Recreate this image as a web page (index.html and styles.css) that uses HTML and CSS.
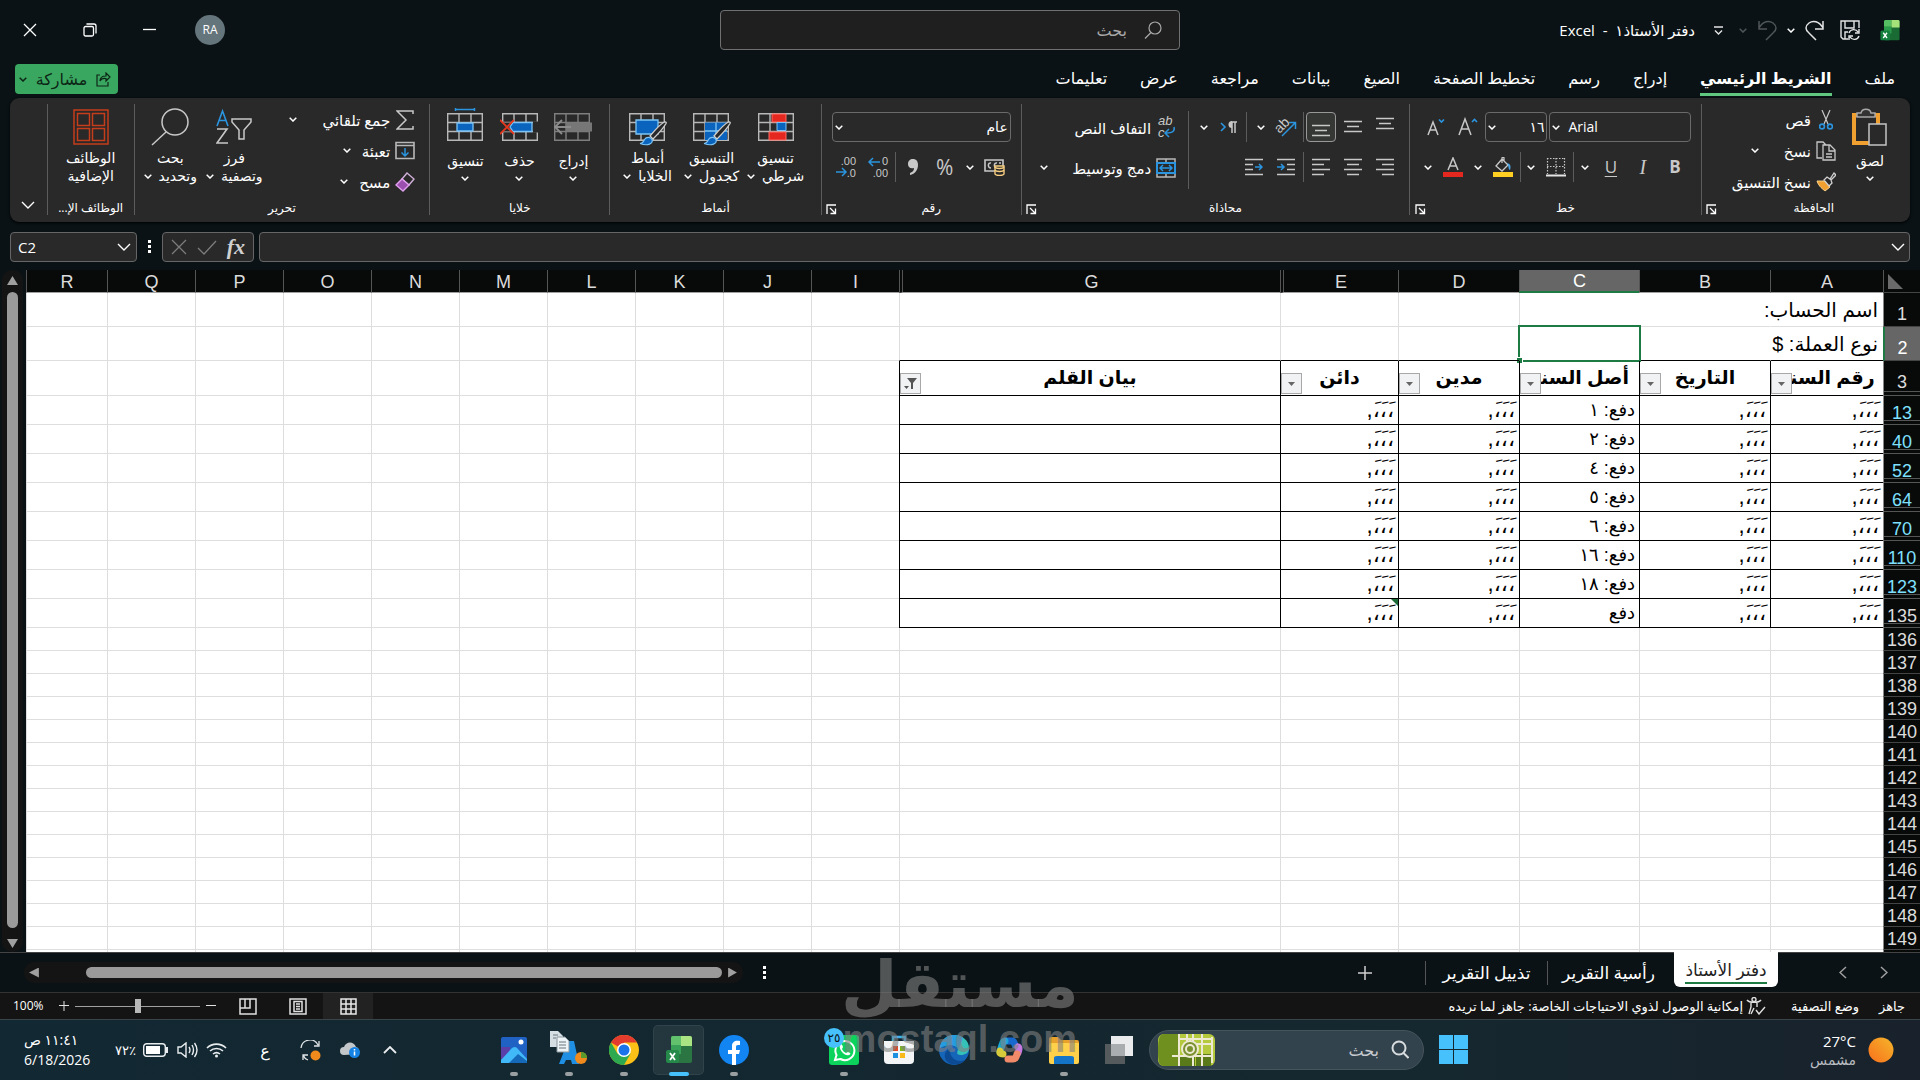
FILE: index.html
```html
<!DOCTYPE html>
<html lang="ar" dir="rtl">
<head>
<meta charset="utf-8">
<meta name="viewport" content="width=device-width, initial-scale=1">
<title>دفتر الأستاذ١ - Excel</title>
<link rel="stylesheet" href="styles.css">
</head>
<body>
<svg class="defs" aria-hidden="true">
  <symbol id="chev" viewBox="0 0 8 5"><path d="M.7.7 4 4 7.3.7" fill="none" stroke="currentColor" stroke-width="1.5"/></symbol>
  <symbol id="chev-lg" viewBox="0 0 14 8"><path d="M1 1l6 6 6-6" fill="none" stroke="currentColor" stroke-width="1.4"/></symbol>
  <symbol id="dots" viewBox="0 0 4 14"><path d="M0 0h3v3H0zM0 5h3v3H0zM0 10h3v3H0z" fill="currentColor"/></symbol>
  <symbol id="launch" viewBox="0 0 11 11"><path d="M1 10V1h9M4 4l5 5M9.500 4.500v5h-5" fill="none" stroke="currentColor" stroke-width="1.3"/></symbol>
  <symbol id="grid" viewBox="0 0 36 28"><path d="M.7.7h34.600v26.600H.7zM.7 9.500h34.600M.7 18.500h34.600M12 .7v26.600M24 .7v26.600" fill="none" stroke="#b8b8b8" stroke-width="1.4"/></symbol>
  <symbol id="brush" viewBox="0 0 28 25"><path d="M11 15C16 9 21 3 25.500 1c1.500-.3 2 .5 1.500 1.500C24 8 19 13 14 18z" fill="#292929" stroke="#d0d0d0" stroke-width="1.3"/><path d="M1 22.500c3 0 3.500-2 4.500-4 2-3 6-2.500 7.500 0 1.500 4-4 7-12 4z" fill="#0a64bd" stroke="#7cc4f5" stroke-width="1.2"/></symbol>
  <symbol id="xl" viewBox="0 0 26 28"><rect x="5" width="21" height="27" rx="2" fill="#1a6b33"/><path d="M7 0h8v9H5V2q0-2 2-2z" fill="#55bd62"/><path d="M15 0h9q2 0 2 2v8H15z" fill="#a5e37a"/><path d="M5 9h10v9H5z" fill="#2a9a4b"/><rect y="14" width="13" height="13" rx="2" fill="#15803d"/><path d="M4 17l5 7M9 17l-5 7" stroke="#fff" stroke-width="1.8"/></symbol>
</svg>

<header class="titlebar">
  <div class="quick">
    <svg class="app-icon" viewBox="0 0 26 28"><use href="#xl"/></svg>
    <button class="qbtn save" aria-label="حفظ"><svg width="21" height="21" viewBox="0 0 21 21" fill="none" stroke="#e4e4e4" stroke-width="1.4"><path d="M8 19H3L1 17V1h18v7M5 1v7h9V1M5 19v-7h3"/><path d="M9 13a5 5 0 0 1 9-1M19 9v4h-4M19 16a5 5 0 0 1-9 1M9 20v-4h4"/></svg></button>
    <button class="qbtn" aria-label="إعادة"><svg width="20" height="21" viewBox="0 0 20 21" fill="none" stroke="#e4e4e4" stroke-width="1.5"><path d="M18 1v8h-8M18 8C14 1 8 0 4 3S0 10 4 13l7 7"/></svg></button>
    <button class="qchev" aria-label="خيارات الإعادة"><svg class="chev"><use href="#chev"/></svg></button>
    <button class="qbtn" aria-label="تراجع"><svg width="20" height="21" viewBox="0 0 20 21" fill="none" stroke="#505659" stroke-width="1.5"><path d="M2 1v8h8M2 8C6 1 12 0 16 3s4 7 0 10l-7 7"/></svg></button>
    <button class="qchev dim" aria-label="خيارات التراجع"><svg class="chev"><use href="#chev"/></svg></button>
    <button class="qchev wide" aria-label="تخصيص"><svg width="9" height="9" viewBox="0 0 9 9" fill="none" stroke="#e4e4e4" stroke-width="1.4"><path d="M0 1h9M1 4.500 4.500 8 8 4.500"/></svg></button>
    <h1 class="doc-title">دفتر الأستاذ١ &nbsp;-&nbsp; Excel</h1>
  </div>
  <label class="search"><svg width="18" height="18" viewBox="0 0 18 18" fill="none" stroke="#a8a8a8" stroke-width="1.2"><circle cx="11" cy="7" r="6"/><path d="M7 11.500 1 17.500"/></svg><input type="text" placeholder="بحث" aria-label="بحث"></label>
  <div class="window-controls">
    <span class="avatar">RA</span>
    <button aria-label="تصغير"><svg width="14" height="14" viewBox="0 0 14 14"><path d="M0 6.500h13" stroke="#fff" stroke-width="1.3"/></svg></button>
    <button aria-label="استعادة"><svg width="14" height="14" viewBox="0 0 14 14" fill="none" stroke="#fff" stroke-width="1.3"><rect x="1" y="3.500" width="9.500" height="9.500" rx="1.500"/><path d="M3.500 1H11q2 0 2 2v7.500"/></svg></button>
    <button aria-label="إغلاق"><svg width="14" height="14" viewBox="0 0 14 14"><path d="M1 1l12 12M13 1 1 13" stroke="#fff" stroke-width="1.3"/></svg></button>
  </div>
</header>

<nav class="tabs">
  <a href="#">ملف</a><a href="#" class="active">الشريط الرئيسي</a><a href="#">إدراج</a><a href="#">رسم</a><a href="#">تخطيط الصفحة</a><a href="#">الصيغ</a><a href="#">بيانات</a><a href="#">مراجعة</a><a href="#">عرض</a><a href="#">تعليمات</a>
  <button class="share"><svg width="15" height="15" viewBox="0 0 15 15" fill="none" stroke="#0c2616" stroke-width="1.2"><path d="M4 3H1v11h11v-4M4 9c0-4 3-5 6-5V1l4 4-4 4V6.500C7 6 5 7 4 9z"/></svg><span>مشاركة</span><svg class="chev"><use href="#chev"/></svg></button>
</nav>

<section class="ribbon">
  <div class="group g-clip">
    <div class="body">
      <button class="big"><svg width="36" height="38" viewBox="0 0 36 38" fill="none"><path d="M2 7h24v28H2z" stroke="#f0a030" stroke-width="4"/><path d="M6 9h16v22H6z" fill="#292929"/><path d="M5 9V5h4c1-5 9-5 10 0h4v4z" fill="#333" stroke="#a8a8a8" stroke-width="1.5"/><path d="M17 16h17v21H17z" fill="#292929" stroke="#c4c4c4" stroke-width="1.500"/></svg><span>لصق</span><svg class="chev"><use href="#chev"/></svg></button>
      <div class="stack">
        <button class="line"><i class="ico"><svg width="14" height="20" viewBox="0 0 14 20" fill="none"><path d="M3 0l6 14M11 0 5 14" stroke="#c8c8c8" stroke-width="1.2"/><circle cx="3" cy="16.500" r="2.400" stroke="#2b95e0" stroke-width="1.600"/><circle cx="11" cy="16.500" r="2.400" stroke="#2b95e0" stroke-width="1.600"/></svg></i><span>قص</span></button>
        <button class="line"><i class="ico"><svg width="20" height="20" viewBox="0 0 20 20" fill="none" stroke="#c8c8c8" stroke-width="1.3"><path d="M6 17H1V1h6l3 3M7 4h7l5 5v10H7zM13 4v6h6M10 13h6M10 16h6"/></svg></i><span>نسخ</span><svg class="chev far"><use href="#chev"/></svg></button>
        <button class="line"><i class="ico"><svg width="20" height="20" viewBox="0 0 20 20"><path d="M1 9c5 0 8 0 8 0l5 6-5 4C7 17 3 15 1 9z" fill="#f0a030" stroke="#f8d38a" stroke-width="1"/><path d="M8 8l3-3 3 2 4-6 2 2-5 5 1 3-3 3z" fill="#292929" stroke="#d0d0d0" stroke-width="1.300"/></svg></i><span>نسخ التنسيق</span></button>
      </div>
    </div>
    <div class="caption more"><span>الحافظة</span><button class="launcher" aria-label="خيارات الحافظة"><svg><use href="#launch"/></svg></button></div>
  </div>

  <div class="group g-font">
    <div class="body rows">
      <div class="row">
        <div class="combo face" dir="ltr"><button aria-label="قائمة الخطوط"><svg class="chev"><use href="#chev"/></svg></button><input type="text" value="Arial" aria-label="الخط"></div>
        <div class="combo size"><input type="text" value="١٦" aria-label="حجم الخط"><button aria-label="قائمة الأحجام"><svg class="chev"><use href="#chev"/></svg></button></div>
        <button class="ib" aria-label="تكبير الخط"><svg width="20" height="20" viewBox="0 0 20 20" fill="none"><path d="M1 18 7 2l6 16M3 12h8" stroke="#c8c8c8" stroke-width="1.500"/><path d="M14 5l2.500-2.500L19 5" stroke="#2b95e0" stroke-width="1.600"/></svg></button>
        <button class="ib" aria-label="تصغير الخط"><svg width="20" height="20" viewBox="0 0 20 20" fill="none"><path d="M2 18 7 5l5 13M4 13h6" stroke="#c8c8c8" stroke-width="1.500"/><path d="M13 2.500 15.500 5 18 2.500" stroke="#2b95e0" stroke-width="1.600"/></svg></button>
      </div>
      <div class="row">
        <button class="ib b">B</button><button class="ib i">I</button><button class="ib u">U</button>
        <button class="cb" aria-label="تسطير"><svg class="chev"><use href="#chev"/></svg></button><span class="sep"></span>
        <button class="ib" aria-label="حدود"><svg width="20" height="20" viewBox="0 0 20 20" fill="none" stroke="#c8c8c8"><path d="M1 1.500h18M1 9.500h18M1.500 1v16M10 1v16M18.500 1v16" stroke-dasharray="1.500 1.500" stroke-width="1.200"/><path d="M0 18.500h20" stroke="#e6e6e6" stroke-width="2"/></svg></button>
        <button class="cb" aria-label="خيارات الحدود"><svg class="chev"><use href="#chev"/></svg></button><span class="sep"></span>
        <button class="ib" aria-label="لون التعبئة"><svg width="20" height="20" viewBox="0 0 20 20"><path d="M3 9l6-7 6 6-6 6zM9 6V1c0-1 2-1 2 0v3" fill="none" stroke="#c8c8c8" stroke-width="1.300"/><path d="M14 6c4 1 4 4 3 7-2-1-1-4-3-7z" fill="#4aa5e6"/><path d="M0 15h20v5H0z" fill="#ffd021"/></svg></button>
        <button class="cb" aria-label="ألوان التعبئة"><svg class="chev"><use href="#chev"/></svg></button>
        <button class="ib" aria-label="لون الخط"><svg width="20" height="20" viewBox="0 0 20 20"><path d="M5 13 10 1l5 12M7 9h6" fill="none" stroke="#c8c8c8" stroke-width="1.500"/><path d="M0 15h20v5H0z" fill="#e5281f"/></svg></button>
        <button class="cb" aria-label="ألوان الخط"><svg class="chev"><use href="#chev"/></svg></button>
      </div>
    </div>
    <div class="caption more"><span>خط</span><button class="launcher" aria-label="خيارات الخط"><svg><use href="#launch"/></svg></button></div>
  </div>

  <div class="group g-align">
    <div class="body">
      <div class="rows">
        <div class="row">
          <button class="ib" aria-label="محاذاة للأعلى"><svg class="bars" viewBox="0 0 18 20"><path d="M0 1.500h18M3 6.500h12M0 11.500h18"/></svg></button>
          <button class="ib" aria-label="محاذاة للوسط"><svg class="bars" viewBox="0 0 18 20"><path d="M0 4.500h18M3 9.500h12M0 14.500h18"/></svg></button>
          <button class="ib on" aria-label="محاذاة للأسفل"><svg class="bars" viewBox="0 0 18 20"><path d="M0 8.500h18M3 13.500h12M0 18.500h18"/></svg></button>
          <span class="sep"></span>
          <button class="ib" aria-label="الاتجاه"><svg class="glyph" width="22" height="20" viewBox="0 0 22 20"><text x="0" y="14" transform="rotate(-45 6 10)" font-size="14" direction="ltr">ab</text><path d="M7 19 20 6M14 5.500h6.500V12" fill="none" stroke="#2b95e0" stroke-width="1.500"/></svg></button>
          <button class="cb" aria-label="خيارات الاتجاه"><svg class="chev"><use href="#chev"/></svg></button><span class="sep mid"></span>
          <button class="ib" aria-label="اتجاه النص"><svg width="18" height="16" viewBox="0 0 18 16"><path d="M1 4l4 4-4 4" fill="none" stroke="#2b95e0" stroke-width="1.600"/><path d="M12 14V3M15 14V3M17 3h-6" fill="none" stroke="#c8c8c8" stroke-width="1.500"/><path d="M12 2a3.500 3.500 0 0 0 0 7z" fill="#c8c8c8"/></svg></button>
          <button class="cb" aria-label="خيارات اتجاه النص"><svg class="chev"><use href="#chev"/></svg></button>
        </div>
        <div class="row">
          <button class="ib" aria-label="محاذاة لليمين"><svg class="bars" viewBox="0 0 18 20"><path d="M0 2.500h18M6 7.500h12M0 12.500h18M6 17.500h12"/></svg></button>
          <button class="ib" aria-label="توسيط"><svg class="bars" viewBox="0 0 18 20"><path d="M0 2.500h18M3 7.500h12M0 12.500h18M3 17.500h12"/></svg></button>
          <button class="ib" aria-label="محاذاة لليسار"><svg class="bars" viewBox="0 0 18 20"><path d="M0 2.500h18M0 7.500h12M0 12.500h18M0 17.500h12"/></svg></button>
          <span class="sep"></span>
          <button class="ib" aria-label="إنقاص المسافة"><svg class="bars" viewBox="0 0 18 20"><path d="M0 2.500h18M10 7.500h8M10 12.500h8M0 17.500h18"/><path class="blue" d="M0 10h7M4 7l3 3-3 3"/></svg></button>
          <button class="ib" aria-label="زيادة المسافة"><svg class="bars" viewBox="0 0 18 20"><path d="M0 2.500h18M0 7.500h8M0 12.500h8M0 17.500h18"/><path class="blue" d="M10 10h7M14 7l3 3-3 3"/></svg></button>
        </div>
      </div>
      <span class="sep tall"></span>
      <div class="rows wrap">
        <button class="line"><i class="ico"><svg class="glyph" width="19" height="21" viewBox="0 0 19 21"><text x="1" y="8" font-size="13" direction="ltr">ab</text><text x="1" y="20" font-size="13" direction="ltr">c</text><path d="M17 10c1 4-1 6-8 6M12 12l-4 4 4 4" fill="none" stroke="#2b95e0" stroke-width="1.500"/></svg></i><span>التفاف النص</span></button>
        <button class="line"><i class="ico"><svg width="20" height="20" viewBox="0 0 20 20" fill="none"><path d="M1 1h18v18H1zM10 1v18" stroke="#b8b8b8" stroke-width="1.500"/><path d="M1 5h18v10H1z" fill="#292929" stroke="#2b95e0" stroke-width="2"/><path d="M4 10h12M7 7l-3 3 3 3M13 7l3 3-3 3" stroke="#2b95e0" stroke-width="1.500"/></svg></i><span>دمج وتوسيط</span><svg class="chev far"><use href="#chev"/></svg></button>
      </div>
    </div>
    <div class="caption more"><span>محاذاة</span><button class="launcher" aria-label="خيارات المحاذاة"><svg><use href="#launch"/></svg></button></div>
  </div>

  <div class="group g-num">
    <div class="body rows">
      <div class="row"><div class="combo fmt"><input type="text" value="عام" aria-label="تنسيق الرقم"><button aria-label="قائمة التنسيقات"><svg class="chev"><use href="#chev"/></svg></button></div></div>
      <div class="row">
        <button class="ib" aria-label="عملة"><svg width="21" height="18" viewBox="0 0 21 18" fill="none"><path d="M1 2h18v11H1z" stroke="#c8c8c8" stroke-width="1.600"/><path d="M7 5c-3-1-4 5 0 5M13 5c-3-1-4 5 0 5M17 5h-2" stroke="#c8c8c8" stroke-width="1.500"/><path d="M11 8h9v8c-1 2-8 2-9 0z" fill="#292929" stroke="#f8cf80" stroke-width="1.400"/><path d="M11 9c1 2 8 2 9 0M11 12c1 2 8 2 9 0" stroke="#f8cf80" stroke-width="1.400"/></svg></button>
        <button class="cb" aria-label="خيارات العملة"><svg class="chev"><use href="#chev"/></svg></button>
        <button class="ib pct">%</button>
        <button class="ib" aria-label="فاصلة"><svg width="10" height="18" viewBox="0 0 10 18"><path d="M5 1c3 0 5 2 5 6 0 5-3 9-8 10v-2c3-1 4-3 4-5-4 1-6-1-6-4s2-5 5-5z" fill="#c8c8c8"/></svg></button>
        <span class="sep"></span>
        <button class="ib" aria-label="زيادة العشرية"><svg class="glyph" width="20" height="20" viewBox="0 0 20 20"><g font-size="11" direction="ltr" text-anchor="end"><text x="20" y="8">0</text><text x="20" y="20">.00</text></g><path d="M1 5h11M5 1 1 5l4 4" fill="none" stroke="#2b95e0" stroke-width="1.500"/></svg></button>
        <button class="ib" aria-label="إنقاص العشرية"><svg class="glyph" width="20" height="20" viewBox="0 0 20 20"><g font-size="11" direction="ltr" text-anchor="end"><text x="20" y="8">.00</text><text x="20" y="20">.0</text></g><path d="M0 15h9M6 11l4 4-4 4" fill="none" stroke="#2b95e0" stroke-width="1.500"/></svg></button>
      </div>
    </div>
    <div class="caption more"><span>رقم</span><button class="launcher" aria-label="خيارات الرقم"><svg><use href="#launch"/></svg></button></div>
  </div>

  <div class="group g-styles">
    <div class="body">
      <button class="big two"><svg width="36" height="38" viewBox="0 0 36 38"><use href="#grid" y="5" width="36" height="28"/><path d="M14 6h14v8H14zM11 24h17v8H11z" fill="#e5281f" stroke="#ff6b62"/><path d="M19 14.500h9v8h-9z" fill="#0a64bd" stroke="#7cc4f5"/></svg><span>تنسيق</span><span class="l2">شرطي<svg class="chev"><use href="#chev"/></svg></span></button>
      <button class="big two"><svg width="38" height="38" viewBox="0 0 38 38"><use href="#grid" y="5" width="36" height="28"/><path d="M12 14.500h22V32H12z" fill="#0a64bd"/><path d="M12 23h22M23 14.500V32" stroke="#7cc4f5" stroke-width="1.300"/><use href="#brush" x="10" y="13" width="28" height="25"/></svg><span>التنسيق</span><span class="l2">كجدول<svg class="chev"><use href="#chev"/></svg></span></button>
      <button class="big two"><svg width="38" height="38" viewBox="0 0 38 38"><use href="#grid" y="5" width="36" height="28"/><path d="M7 12h22v14H7z" fill="#0a64bd" stroke="#7cc4f5" stroke-width="1.300"/><use href="#brush" x="10" y="13" width="28" height="25"/></svg><span>أنماط</span><span class="l2">الخلايا<svg class="chev"><use href="#chev"/></svg></span></button>
    </div>
    <div class="caption"><span>أنماط</span></div>
  </div>

  <div class="group g-cells">
    <div class="body">
      <button class="big"><svg width="38" height="38" viewBox="0 0 38 38"><g opacity=".6"><use href="#grid" y="5" width="36" height="28"/></g><path d="M12 14.500h26v9H12z" fill="#777"/><path d="M0 19h17M8 12l-7 7 7 7" fill="none" stroke="#8c8c8c" stroke-width="1.800"/></svg><span>إدراج</span><svg class="chev"><use href="#chev"/></svg></button>
      <button class="big"><svg width="38" height="38" viewBox="0 0 38 38"><use href="#grid" x="2" y="5" width="36" height="28"/><path d="M33 13.500h5v11h-5zM0 14.500h12v9H0z" fill="#292929"/><path d="M13 14.500h19v9H13l-3-4.500z" fill="#0a64bd" stroke="#7cc4f5" stroke-width="1.300"/><path d="M0 12l14 14M14 12 0 26" stroke="#e5381f" stroke-width="1.800"/></svg><span>حذف</span><svg class="chev"><use href="#chev"/></svg></button>
      <button class="big"><svg width="36" height="38" viewBox="0 0 36 38"><use href="#grid" y="5" width="36" height="28"/><path d="M10 15h16v8H10z" fill="#0a64bd" stroke="#7cc4f5" stroke-width="1.300"/><path d="M8 1.500h20M8.500 0v3M27.500 0v3" stroke="#2b95e0" stroke-width="1.500"/></svg><span>تنسيق</span><svg class="chev"><use href="#chev"/></svg></button>
    </div>
    <div class="caption"><span>خلايا</span></div>
  </div>

  <div class="group g-edit">
    <div class="body">
      <div class="stack">
        <button class="line"><i class="ico"><svg width="18" height="20" viewBox="0 0 18 20"><path d="M17 4V1H1l9 9-9 9h16v-3" fill="none" stroke="#c8c8c8" stroke-width="1.500"/></svg></i><span>جمع تلقائي</span><svg class="chev far"><use href="#chev"/></svg></button>
        <button class="line"><i class="ico"><svg width="20" height="20" viewBox="0 0 20 20" fill="none"><path d="M1 1.500h18v16H1zM1 4.500h18" stroke="#b8b8b8" stroke-width="1.600"/><path d="M10 7v8M6.500 11.500 10 15l3.500-3.500" stroke="#2b95e0" stroke-width="1.500"/></svg></i><span>تعبئة</span><svg class="chev"><use href="#chev"/></svg></button>
        <button class="line"><i class="ico"><svg width="20" height="20" viewBox="0 0 20 20"><path d="M12 1l7 6-5 6-7-6z" fill="#292929" stroke="#d0b0d8" stroke-width="1.400"/><path d="M7 7l7 6-6 6-7-6z" fill="#9b4fae" stroke="#e0a0ee" stroke-width="1.400"/></svg></i><span>مسح</span><svg class="chev"><use href="#chev"/></svg></button>
      </div>
      <button class="big two"><svg width="36" height="38" viewBox="0 0 36 38" fill="none"><path d="M1 18 6.500 3 12 18M3 12.500h7" stroke="#2b95e0" stroke-width="1.600"/><path d="M1 21h10L1 35h11" stroke="#c8c8c8" stroke-width="1.600"/><path d="M16 11h19v3l-7 8v9h-5v-9l-7-8z" stroke="#c8c8c8" stroke-width="1.500"/></svg><span>فرز</span><span class="l2">وتصفية<svg class="chev"><use href="#chev"/></svg></span></button>
      <button class="big two"><svg width="38" height="38" viewBox="0 0 38 38" fill="none" stroke="#c8c8c8" stroke-width="1.500"><circle cx="24" cy="14" r="13"/><path d="M15 24 1 37"/></svg><span>بحث</span><span class="l2">وتحديد<svg class="chev"><use href="#chev"/></svg></span></button>
    </div>
    <div class="caption"><span>تحرير</span></div>
  </div>

  <div class="group g-add">
    <div class="body">
      <button class="big two"><svg width="36" height="38" viewBox="0 0 36 38" fill="none" stroke="#c43e1c" stroke-width="1.500"><path d="M1 2h34v34H1zM4.500 5.500h12v12h-12zM19.500 5.500h12v12h-12zM4.500 20.500h12v12h-12zM19.500 20.500h12v12h-12z"/></svg><span>الوظائف</span><span class="l2">الإضافية</span></button>
    </div>
    <div class="caption"><span>الوظائف الإ...</span></div>
  </div>
  <button class="collapse" aria-label="طي الشريط"><svg width="14" height="8"><use href="#chev-lg"/></svg></button>
</section>

<section class="formula" dir="ltr">
  <div class="box name"><input type="text" value="C2" aria-label="مربع الاسم"><button aria-label="قائمة الأسماء"><svg width="14" height="8"><use href="#chev-lg"/></svg></button></div>
  <svg class="dots"><use href="#dots"/></svg>
  <div class="box fx"><button aria-label="إلغاء"><svg width="16" height="16" viewBox="0 0 16 16"><path d="M1 1l14 14M15 1 1 15" stroke="#7c7c7c" stroke-width="1.300"/></svg></button><button aria-label="إدخال"><svg width="20" height="15" viewBox="0 0 20 15"><path d="M1 8l6 6L19 1" fill="none" stroke="#7c7c7c" stroke-width="1.300"/></svg></button><button class="fxb">fx</button></div>
  <div class="box input"><input type="text" aria-label="شريط الصيغة"><button aria-label="توسيع"><svg width="14" height="8"><use href="#chev-lg"/></svg></button></div>
</section>

<main class="work">
  <div class="sheet">
    <table class="cells">
      <colgroup><col class="w-h"><col class="w-a"><col class="w-b"><col class="w-c"><col class="w-d"><col class="w-e"><col class="w-g"><col class="w-n"><col class="w-n"><col class="w-n"><col class="w-n"><col class="w-n"><col class="w-n"><col class="w-n"><col class="w-n"><col class="w-n"><col></colgroup>
      <thead><tr><th class="corner"><svg width="15" height="15" viewBox="0 0 15 15"><path d="M0 0v15h15z" fill="#6a6a6a"/></svg></th><th>A</th><th>B</th><th class="sel">C</th><th>D</th><th class="gap">E</th><th class="gap">G</th><th>I</th><th>J</th><th>K</th><th>L</th><th>M</th><th>N</th><th>O</th><th>P</th><th>Q</th><th>R</th></tr></thead>
      <tbody></tbody>
    </table>
  </div>
  <div class="vscroll"><i class="tri up"></i><i class="thumb"></i><i class="tri down"></i></div>
</main>

<section class="sheetbar">
  <button class="nav" aria-label="الورقة السابقة"><svg width="8" height="13" viewBox="0 0 8 13"><path d="M1 1l6 5.500L1 12" fill="none" stroke="#a0a0a0" stroke-width="1.500"/></svg></button>
  <button class="nav" aria-label="الورقة التالية"><svg width="8" height="13" viewBox="0 0 8 13"><path d="M7 1 1 6.500 7 12" fill="none" stroke="#a0a0a0" stroke-width="1.500"/></svg></button>
  <button class="tab current"><span>دفتر الأستاذ</span></button>
  <button class="tab">رأسية التقرير</button>
  <button class="tab">تذييل التقرير</button>
  <button class="plus" aria-label="ورقة جديدة"><svg width="14" height="14" viewBox="0 0 14 14"><path d="M7 0v14M0 7h14" stroke="#d0d0d0" stroke-width="1.500"/></svg></button>
  <svg class="dots"><use href="#dots"/></svg>
  <div class="hscroll"><i class="tri right"></i><i class="thumb"></i><i class="tri left"></i></div>
</section>

<footer class="status">
  <span class="ready">جاهز</span><span class="mode">وضع التصفية</span>
  <button class="a11y"><svg width="20" height="18" viewBox="0 0 20 18" fill="none" stroke="#e0e0e0" stroke-width="1.400"><circle cx="8" cy="2.500" r="2"/><path d="M1 3c2 3 12 3 14 0M5 6v4L3 17M11 6v4M8 11l-3 6M10 13l3 4 6-7"/></svg><span>إمكانية الوصول لذوي الاحتياجات الخاصة: جاهز لما تريده</span></button>
  <span class="grow"></span>
  <button class="view current-view" aria-label="عادي"><svg width="17" height="17" viewBox="0 0 17 17" fill="none" stroke="#e8e8e8" stroke-width="1.500"><path d="M1 1h15v15H1zM1 6h15M1 11h15M6 1v15M11 1v15"/></svg></button>
  <button class="view" aria-label="تخطيط الصفحة"><svg width="18" height="17" viewBox="0 0 18 17" fill="none" stroke="#e0e0e0" stroke-width="1.500"><path d="M1 1h16v15H1zM5 3.500h8v10H5zM7 6h4M7 8.500h4M7 11h4"/></svg></button>
  <button class="view" aria-label="فواصل الصفحات"><svg width="18" height="17" viewBox="0 0 18 17" fill="none" stroke="#e0e0e0" stroke-width="1.500"><path d="M1 1h16v15H1zM1 10h10V1M6 1v9"/></svg></button>
  <div class="zoom"><button aria-label="تصغير"><svg width="10" height="10" viewBox="0 0 10 10"><path d="M0 4.500h10" stroke="#e0e0e0"/></svg></button><input type="range" min="0" max="100" value="50" aria-label="تكبير"><button aria-label="تكبير"><svg width="10" height="10" viewBox="0 0 10 10"><path d="M0 4.500h10M5 0v10" stroke="#e0e0e0"/></svg></button></div>
  <span class="pct-label">100%</span>
</footer>

<section class="taskbar">
  <div class="weather"><svg width="26" height="26" viewBox="0 0 26 26"><defs><linearGradient id="sun" x1="1" y1="0" x2="0" y2="1"><stop offset="0" stop-color="#f5b62a"/><stop offset="1" stop-color="#f8701c"/></linearGradient></defs><circle cx="13" cy="13" r="12.500" fill="url(#sun)"/></svg><div><b dir="ltr">27°C</b><span>مشمس</span></div></div>
  <div class="apps">
    <button class="app" aria-label="ابدأ"><svg width="30" height="30" viewBox="0 0 30 30"><path d="M0 0h14v14H0zM15 0h14v14H15zM0 15h14v14H0zM15 15h14v14H15z" fill="#46c1fb"/></svg></button>
    <label class="tsearch"><svg width="18" height="20" viewBox="0 0 18 20" fill="none" stroke="#d8dcde" stroke-width="2"><circle cx="8" cy="8" r="6.500"/><path d="M12.500 13l5 5"/></svg><input type="text" placeholder="بحث" aria-label="بحث في ويندوز"><svg class="thumbpic" width="57" height="32" viewBox="0 0 57 32"><rect width="57" height="32" rx="6" fill="#b4c93c"/><path d="M6 0h14v32H6C1 32 0 28 0 16S2 0 6 0z" fill="#6f8f1e"/><path d="M21 22h16v10H21zM38 20h15v12H38z" fill="#5a7a1a"/><path d="M21 0v32M29 0v7M35 0v32M44 0v32M54 3v26M14 22h40M20 5h35M36 10h18" stroke="#eee9d2" stroke-width="2" fill="none"/><circle cx="32" cy="15" r="8" fill="#7a9130" stroke="#eee9d2" stroke-width="2"/><circle cx="32" cy="15" r="4" fill="none" stroke="#eee9d2" stroke-width="2"/></svg></label>
    <button class="app" aria-label="عرض المهام"><svg width="30" height="30" viewBox="0 0 30 30"><rect x="7" y="1" width="22" height="20" fill="#e9ebec"/><rect x="1" y="9" width="20" height="20" fill="#555a5d"/><path d="M7 9h14v12H7z" fill="#a9adaf"/></svg></button>
    <button class="app run" aria-label="مستكشف الملفات"><svg width="30" height="28" viewBox="0 0 30 28"><path d="M0 3q0-2 2-2h7l3 3h16q2 0 2 2v8H0z" fill="#e8a12a"/><path d="M0 9q0-2 2-2h28v19q0 2-2 2H2q-2 0-2-2z" fill="#ffd04a"/><path d="M5 28v-6q0-2 3-2h14q3 0 3 2v6z" fill="#1474c8"/></svg></button>
    <button class="app" aria-label="Copilot"><svg width="28" height="28" viewBox="0 0 28 28" fill="none" stroke-width="7" stroke-linecap="round" stroke-linejoin="round"><path d="M11 5h6q2 0 3 4" stroke="#1769cf"/><path d="M10 5q-2 0-3 4l-2 6" stroke="#19a6d8"/><path d="M5 15q-1 3 3 3" stroke="#d6cb3a"/><path d="M23 11q2 1 0 6" stroke="#c77be0"/><path d="M22 18q-1 5-4 5h-5" stroke="#f08a68"/></svg></button>
    <button class="app" aria-label="Edge"><svg width="30" height="30" viewBox="0 0 30 30"><circle cx="15" cy="15" r="15" fill="#1565b8"/><path d="M1 13C2 5 8 0 15 0c9 0 15 6 15 13 0 5-4 7-8 7-5 0-4-3-3-5 0-5-10-7-18-2z" fill="#35c1b8"/><path d="M1 13C2 5 8 0 15 0c4 0 7 1 9 3L19 15c0-5-10-7-18-2z" fill="#259be0"/><path d="M11 16c0 7 7 12 15 9-7 8-22 5-20-6 1-4 5-6 9-6-3 0-4 2-4 3z" fill="#0d4a94"/></svg></button>
    <button class="app" aria-label="المتجر"><svg width="30" height="30" viewBox="0 0 30 30"><path d="M9 8V2h12v6" fill="none" stroke="#3db2f0" stroke-width="2.500"/><path d="M0 6h30v19q0 4-4 4H4q-4 0-4-4z" fill="#f2f4f5"/><path d="M9 11h5v5H9z" fill="#e8492b"/><path d="M16 11h5v5h-5z" fill="#7db813"/><path d="M9 18h5v5H9z" fill="#1d8fe0"/><path d="M16 18h5v5h-5z" fill="#f9b81c"/></svg></button>
    <button class="app run" aria-label="WhatsApp"><svg width="30" height="30" viewBox="0 0 30 30"><rect width="30" height="30" rx="3" fill="#0bd35b"/><path d="M6 25l1.500-5a9.500 9.500 0 1 1 4 4z" fill="none" stroke="#fff" stroke-width="2"/><path d="M11 10c1-2 2-1 3 2l-1 2c1 2 2 3 4 4l2-1c3 1 3 2 1 3-4 2-11-6-9-10z" fill="#fff"/></svg><span class="badge">٢٥</span></button>
    <span class="app"></span>
    <button class="app run" aria-label="Facebook"><svg width="30" height="30" viewBox="0 0 30 30"><circle cx="15" cy="15" r="15" fill="#1285f2"/><path d="M13 30V19H9v-4h4v-4c0-4 3-6 8-5v4c-3 0-4 0-4 2v3h4l-1 4h-3v11z" fill="#fff"/></svg></button>
    <button class="app cur" aria-label="Excel"><svg width="26" height="28"><use href="#xl"/></svg></button>
    <button class="app run" aria-label="Chrome"><svg width="30" height="30" viewBox="0 0 30 30"><circle cx="15" cy="15" r="15" fill="#fbc116"/><path d="M15 15 2 7.500A15 15 0 0 1 28 7.500H15z" fill="#e33b2e"/><path d="M2 7.500A15 15 0 0 0 15 30l6.500-11.300L15 15 8.500 18.700z" fill="#2da94f"/><circle cx="15" cy="15" r="7" fill="#fff"/><circle cx="15" cy="15" r="5.500" fill="#1a73e8"/></svg></button>
    <button class="app run" aria-label="أداة النسخ"><svg class="doc" width="38" height="36" viewBox="0 0 38 36"><path d="M9 35 18 12h6l5 23h-7l-1-4h-5l-2 4z" fill="#1f8fe4"/><path d="M0 2h8l5 5v11H0z" fill="#d5dee3"/><path d="M7 8h8l4 4v11H7z" fill="#eef3f6" stroke="#8b979e"/><path d="M9 13h7M9 16h7M9 19h7M3 6h5M3 9h3" stroke="#6a777e"/><circle cx="31" cy="29" r="6" fill="#f08a1c"/><path d="M31 29v-6q6 0 6 6z" fill="#5a9a2c"/></svg></button>
    <button class="app run" aria-label="الصور"><svg width="26" height="26" viewBox="0 0 26 26"><rect width="26" height="26" rx="2" fill="#1f62c4"/><path d="M0 10h9v12H0z" fill="#5a3fa8"/><path d="M0 26v-3l11-12q3-2 5 0l10 11v2q0 2-2 2z" fill="#41b8f8"/><path d="M8 26l9-9 9 7v2z" fill="#1668b8"/><circle cx="20" cy="5" r="2.500" fill="#fff"/></svg></button>
  </div>
  <div class="tray">
    <button class="t" aria-label="إظهار الأيقونات"><svg width="14" height="8" viewBox="0 0 14 8"><path d="M1 7l6-6 6 6" fill="none" stroke="#e8ecee" stroke-width="1.800"/></svg></button>
    <button class="t" aria-label="السحابة"><svg width="21" height="18" viewBox="0 0 21 18"><path d="M4 14a4 4 0 0 1 0-8C6 0 14 0 16 6q4 1 3 7z" fill="#c3c7ca"/><circle cx="14.500" cy="11.500" r="5.500" fill="#1583e6"/><path d="M14.500 10.500v4M14.500 8v1.500" stroke="#fff" stroke-width="1.500"/></svg></button>
    <button class="t" aria-label="تحديث"><svg width="21" height="21" viewBox="0 0 21 21" fill="none" stroke="#e0e4e6" stroke-width="1.300"><path d="M1 8a9 9 0 0 1 17-3M19 1v5h-5M3 20v-5h5M3 15a9 9 0 0 0 5 5"/><circle cx="15.500" cy="15.500" r="5" fill="#f08a1c" stroke="none"/></svg></button>
    <button class="t lang">ع</button>
    <svg class="wifi" width="21" height="16" viewBox="0 0 21 16" fill="none" stroke="#e8ecee" stroke-width="1.600"><path d="M1 6a13.500 13.500 0 0 1 19 0M4 9a9.500 9.500 0 0 1 13 0M7 12a5.500 5.500 0 0 1 7 0"/><circle cx="10.500" cy="14" r="1.500" fill="#e8ecee" stroke="none"/></svg>
    <svg width="21" height="16" viewBox="0 0 21 16" fill="none" stroke="#e8ecee" stroke-width="1.400"><path d="M1 5h3l5-4v14l-5-4H1zM12 5q2 3 0 6M15 3q3 5 0 10M17.500 1q5 7 0 14"/></svg>
    <svg width="26" height="14" viewBox="0 0 26 14"><rect x=".7" y=".7" width="21.600" height="12.600" rx="3" fill="none" stroke="#e8ecee" stroke-width="1.400"/><rect x="3" y="3" width="14" height="8" fill="#fff"/><path d="M24 4v6" stroke="#e8ecee" stroke-width="2"/></svg>
    <span class="batt" dir="ltr">٧٢٪</span>
    <div class="clock"><span>١١:٤١ ص</span><span dir="ltr">6/18/2026</span></div>
  </div>
</section>

<div class="mark" aria-hidden="true"><b>مستقل</b><span dir="ltr">mostaql.com</span></div>
<script src="app.js"></script>
</body>
</html>
```
FILE: styles.css
```css
* { box-sizing: border-box; }
html, body { height: 100%; }
body {
  margin: 0;
  display: flex;
  flex-direction: column;
  overflow: hidden;
  position: relative;
  background: #0a1215;
  color: #fff;
  font-family: "Open Sans", "DejaVu Sans", sans-serif;
  font-size: 14px;
  line-height: 18px;
}
button, input { font: inherit; color: inherit; background: none; border: 0; padding: 0; margin: 0; min-width: 0; outline: 0; }
button { display: flex; align-items: center; justify-content: center; }
svg { display: block; flex: none; }
.defs { position: absolute; width: 0; height: 0; }
.chev { width: 8px; height: 5px; }
.glyph { overflow: visible; fill: #c8c8c8; font-family: "Liberation Sans", sans-serif; }

/* title bar */
.titlebar { display: grid; grid-template-columns: 740fr 460fr 720fr; align-items: center; height: 60px; flex: none; }
.quick { display: flex; align-items: center; padding-right: 20px; }
.app-icon { width: 20px; height: 21px; }
.qbtn { width: 32px; height: 32px; }
.save { margin-right: 14px; margin-left: 3px; }
.qchev { width: 16px; height: 32px; }
.qchev.dim { color: #505659; }
.qchev.wide { width: 34px; }
.doc-title { margin: 0 6px; font-size: 15px; font-weight: 400; white-space: nowrap; }
.search { display: flex; align-items: center; gap: 17px; height: 40px; padding: 0 17px; background: #1f1f1f; border: 1px solid #707070; border-radius: 4px; }
.search input { flex: 1; font-size: 16px; }
.search input::placeholder { color: #a8a8a8; opacity: 1; }
.window-controls { display: flex; justify-content: flex-end; align-items: center; }
.window-controls button { width: 60px; height: 40px; }
.avatar { width: 30px; height: 30px; margin-left: 15px; border-radius: 50%; background: #65757c; font-size: 12px; line-height: 30px; text-align: center; }

/* ribbon tabs */
.tabs { display: flex; align-items: center; gap: 33px; height: 38px; flex: none; padding: 0 25px 0 15px; font-size: 16px; }
.tabs a { padding-top: 2px; color: #fff; text-decoration: none; line-height: 29px; border-bottom: 3px solid transparent; white-space: nowrap; }
.tabs a.active { font-weight: 700; border-color: #5fc77f; }
.share { margin-right: auto; gap: 6px; width: 103px; height: 30px; padding: 0 7px 0 4px; border-radius: 4px; background: #3aa760; color: #0c2616; }
.share span { flex: 1; }

/* ribbon */
.ribbon { display: flex; height: 124px; flex: none; margin: 0 10px; padding: 6px 0 7px; background: #292929; border-radius: 9px; box-shadow: 0 1px 3px #000; }
.group { display: flex; flex-direction: column; min-width: 0; border-left: 1px solid #5c5c5c; }
.g-clip { flex: 209 1 0; }
.g-font { flex: 292 1 0; }
.g-align { flex: 389 1 0; }
.g-num { flex: 200 1 0; }
.g-styles { flex: 211 1 0; }
.g-cells { flex: 180 1 0; }
.g-edit { flex: 296 1 0; }
.g-add { flex: 86 1 0; }
.collapse { flex: 37 1 0; align-items: flex-end; padding-bottom: 6px; }
.body { display: flex; flex: 1; padding: 0 8px; min-height: 0; }
.caption { display: flex; position: relative; justify-content: center; align-items: flex-end; height: 14px; font-size: 12px; line-height: 14px; white-space: nowrap; }
.caption.more { padding-left: 20px; }
.g-clip .caption { padding-left: 0; justify-content: flex-start; }
.g-clip .caption span { margin-right: 76px; }
.launcher { position: absolute; left: 4px; bottom: 0; width: 12px; height: 12px; }
.launcher svg { width: 11px; height: 11px; }
.rows { display: flex; flex-direction: column; gap: 10px; padding-top: 8px; }
.row { display: flex; align-items: center; height: 30px; }
.ib { width: 32px; height: 30px; flex: none; color: #c8c8c8; }
.cb { width: 18px; height: 30px; flex: none; }
.sep { width: 1px; height: 30px; margin: 0 1px; flex: none; background: #5c5c5c; }
.sep.mid { margin: 0 5px 0 1px; }
.sep.tall { height: 78px; margin: 7px 6px 0; }
.on { background: #353735; border: 1px solid #989898; border-radius: 4px; width: 30px; margin: 0 1px; }
.b { font-size: 17px; font-weight: 700; }
.i { font: italic 20px "Liberation Serif", serif; }
.u { font-size: 17px; text-decoration: underline; text-underline-offset: 3px; }
.pct { font-size: 21px; }
.bars { width: 18px; height: 20px; fill: none; stroke: #c8c8c8; stroke-width: 1.5; }
.bars .blue { stroke: #2b95e0; }
.combo { display: flex; align-items: center; height: 30px; border: 1px solid #6a6a6a; border-radius: 4px; }
.combo input { flex: 1; width: 0; }
.combo button { width: 12px; height: 28px; }
.face { width: 143px; }
.face input { padding-left: 6px; }
.size { width: 63px; margin: 0 2px 0 1px; }
.size input, .fmt input { padding-right: 2px; }
.fmt { width: 180px; }
.g-font .body, .g-num .body { padding: 8px 10px 0; }
.g-font .cb:nth-child(4) { width: 20px; }

.stack { display: flex; flex-direction: column; flex: none; }
.line { justify-content: flex-start; gap: 5px; height: 31px; font-size: 15px; white-space: nowrap; }
.line .chev { margin-right: 6px; }
.line .far { margin-right: 20px; }
.line .ico { display: flex; justify-content: center; width: 20px; }
.wrap { flex: 1; gap: 9px; padding-right: 6px; }
.wrap .far { margin-right: auto; margin-left: 10px; }
.big { flex: none; flex-direction: column; justify-content: flex-start; width: 54px; padding-top: 4px; gap: 6px; white-space: nowrap; }
.big > svg:first-child { height: 38px; }
.big.two { gap: 0; width: 64px; }
.big.two > svg:first-child { margin-bottom: 3px; }
.l2 { display: flex; align-items: center; gap: 7px; }
.g-clip .big { width: 60px; }
.g-clip .body { padding: 0 10px; }
.g-clip .stack { margin-right: 4px; }
.g-styles .body { padding: 0 13px 0 0; }
.g-cells .body { padding: 0 9px; }
.g-edit .body { padding: 0 14px 0 0; }
.g-edit .stack { width: 149px; }
.g-add .body { justify-content: center; }

/* formula bar */
.formula { display: flex; align-items: center; height: 30px; flex: none; margin: 10px 10px 8px; }
.box { display: flex; align-items: center; height: 30px; background: #292929; border: 1px solid #666; border-radius: 4px; }
.box input { flex: 1; width: 0; }
.name { width: 127px; padding: 0 5px 0 7px; font-size: 15px; }
.formula .dots { margin: 0 10px 0 11px; }
.dots { width: 4px; height: 14px; }
.fx { width: 92px; justify-content: space-around; margin-right: 5px; padding: 0 3px; }
.fxb { font: italic 700 22px "Liberation Serif", serif; color: #d0d0d0; }
.input { flex: 1; padding: 0 4px; }

/* worksheet */
.work { display: flex; flex: 1; min-height: 0; }
.sheet { flex: 1; min-width: 0; overflow: hidden; background: #fff; }
.cells { width: 100%; table-layout: fixed; border-collapse: separate; border-spacing: 0; color: #000; font-family: "Liberation Sans", "DejaVu Sans", sans-serif; font-size: 18px; line-height: 20px; }
.w-h { width: 37px; }
.w-a { width: 113px; }
.w-b { width: 131px; }
.w-c { width: 120px; }
.w-d { width: 121px; }
.w-e { width: 118px; }
.w-g { width: 381px; }
.w-n { width: 88px; }
.cells th, .cells td { padding: 0; }
.cells thead th { height: 23px; padding-top: 1px; font-weight: 400; background: #080a0a; color: #dcdcdc; border-left: 1px solid #555; border-bottom: 1px solid #a0a0a0; }
.cells thead th.sel { background: #666; color: #fff; border-bottom: 2px solid #1d7a43; }
.cells thead th.gap { border-left: 4px double #555; }
.cells thead .corner { border-bottom-color: #444; }
.corner svg { margin-right: 17px; }
.cells tbody tr { height: 23px; }
.cells tbody th { font-weight: 400; background: #080a0a; color: #dcdcdc; text-align: center; vertical-align: bottom; border-bottom: 1px solid #444; border-left: 1px solid #888; }
.cells tbody th div { height: 19px; display: flex; align-items: flex-end; justify-content: center; }
.cells tbody .t1 th { padding-bottom: 2px; }
.cells tbody td { position: relative; border-left: 1px solid #dedede; border-bottom: 1px solid #dedede; vertical-align: middle; white-space: nowrap; overflow: visible; }
.cells tbody tr.t1 { height: 34px; }
.cells tbody tr.t3 { height: 35px; }
.cells tbody tr.rec { height: 29px; }
.cells .t1 td { font-size: 20px; padding-right: 5px; }
.cells .t1 td:nth-child(2), .cells .t1 td:nth-child(3) { border-left-color: transparent; }
.cells .edge td:nth-child(-n+7), .cells .t3 td:nth-child(-n+7), .cells .rec td:nth-child(-n+7) { border-bottom-color: #000; }
.cells .t3 td:nth-child(-n+7), .cells .rec td:nth-child(-n+7) { border-left-color: #000; }
.cells .t3 td { font-weight: 700; font-size: 19px; text-align: center; overflow: hidden; }
.cells .rec td { padding-right: 4px; font-size: 18px; line-height: 26px; }
.cells .rec td.code { font-size: 22px; }
.cells .rec th, .cells .t3 th { padding-bottom: 1px; border-bottom-color: #555; box-shadow: inset 0 -3px #080a0a, inset 0 -4px #555; }
.cells .t3 th { padding-bottom: 3px; }
.cells .filtered th { color: #7fe0ff; }
.cells .edge th { background: #666; color: #fff; border-left: 2px solid #1d7a43; }
.cursor { position: absolute; inset: -2px; border: 2px solid #1d7a43; }
.cursor::after { content: ""; position: absolute; left: -3px; bottom: -3px; width: 5px; height: 5px; background: #1d7a43; outline: 1px solid #fff; }
.filter { position: absolute; left: 0; bottom: 1px; width: 21px; height: 21px; background: #f1f2f4; border: 1px solid #a8a8a8; }
.flag::after { content: ""; position: absolute; top: 0; right: 0; width: 7px; height: 7px; background: #1d6b36; clip-path: polygon(0 0, 100% 0, 100% 100%); }
.vscroll { display: flex; flex-direction: column; align-items: center; gap: 6px; width: 21px; margin: 0 3px 0 2px; padding: 6px 0 4px; background: #141414; border-radius: 10px; }
.thumb { background: #9a9a9a; border-radius: 6px; }
.vscroll .thumb { width: 11px; flex: 1; margin-bottom: 4px; }
.tri { width: 11px; height: 10px; background: #a0a0a0; }
.up { clip-path: polygon(50% 0, 100% 90%, 0 90%); }
.down { clip-path: polygon(0 10%, 100% 10%, 50% 100%); }
.right { clip-path: polygon(10% 0, 90% 50%, 10% 100%); }
.left { clip-path: polygon(90% 0, 90% 100%, 0 50%); }

/* sheet tabs */
.sheetbar { display: flex; align-items: center; height: 40px; flex: none; padding: 0 16px 0 24px; border-top: 1px solid #444; font-size: 17px; }
.nav { width: 41px; height: 30px; }
.tab { position: relative; height: 24px; width: 122px; border-left: 1px solid #555; white-space: nowrap; }
.tab.current { align-self: flex-start; width: 104px; height: 35px; margin: -1px 44px 0 5px; padding-top: 2px; background: #fff; color: #222; border: 0; border-radius: 0 0 6px 6px; }
.current span { border-bottom: 2px solid #1d7a43; line-height: 24px; }
.plus { width: 40px; height: 30px; margin-right: 40px; margin-left: auto; }
.sheetbar .dots { margin-left: 20px; }
.hscroll { display: flex; align-items: center; width: 719px; height: 21px; padding: 0 5px; background: #141414; border-radius: 10px; }
.hscroll .thumb { width: 639px; height: 11px; margin: 0 5px 0 auto; }
.hscroll .left { margin-right: 46px; }

/* status bar */
.status { display: flex; align-items: center; height: 28px; flex: none; padding: 0 15px 0 13px; background: #141414; border-top: 1px solid #333; border-bottom: 1px solid #3a454a; font-size: 13px; white-space: nowrap; }
.mode { margin: 0 20px 0 25px; }
.a11y { gap: 3px; }
.grow { flex: 1; }
.view { width: 50px; height: 26px; }
.current-view { background: #222; }
.zoom { display: flex; align-items: center; gap: 6px; margin: 0 7px; }
.pct-label { width: 39px; font-size: 12px; text-align: left; }
.zoom input { appearance: none; width: 125px; height: 14px; background: linear-gradient(#a0a0a0, #a0a0a0) center / 100% 1px no-repeat; }
.zoom input::-webkit-slider-thumb { appearance: none; width: 6px; height: 14px; background: #b8b8b8; }

/* taskbar */
.taskbar { display: grid; grid-template-columns: 413px 1fr 430px; align-items: center; height: 60px; flex: none; padding: 0 26px 0 24px; background: linear-gradient(90deg, #122832, #15272f 75%, #19222c); }
.weather { display: flex; align-items: center; gap: 12px; }
.weather b { display: block; font-weight: 400; font-size: 15px; line-height: 20px; text-align: right; }
.weather span { color: #b8bcc0; font-size: 14px; }
.apps { display: flex; align-items: center; }
.app { position: relative; width: 55px; height: 50px; flex: none; }
.run::after, .cur::after { content: ""; position: absolute; bottom: -1px; left: 24px; width: 8px; height: 4px; border-radius: 2px; background: #9a9fa2; }
.cur::after { left: 18px; width: 20px; background: #46c1fb; }
.cur::before { content: ""; position: absolute; inset: 0 2px; background: #ffffff12; border: 1px solid #ffffff10; border-radius: 5px; }
.tsearch { display: flex; align-items: center; gap: 12px; width: 275px; height: 40px; flex: none; margin: 0 2px 0 3px; padding: 0 14px 0 8px; border-radius: 20px; background: #33434d; border: 1px solid #46545c; }
.tsearch input { flex: 1; font-size: 16px; }
.tsearch input::placeholder { color: #c8ccd0; opacity: 1; }
.badge { position: absolute; left: 8px; top: 3px; width: 20px; height: 20px; border-radius: 50%; background: #46c1fb; color: #0a1215; font-size: 12px; line-height: 20px; }
.doc { margin-top: -6px; }
.tray { display: flex; align-items: center; justify-content: flex-end; }
.tray > svg { margin-right: 8px; }
.tray .t { width: 40px; height: 40px; }
.tray .lang { width: 50px; font-size: 16px; }
.tray .wifi { margin-right: 13px; }
.batt { width: 35px; text-align: center; font-size: 13px; }
.clock { display: flex; flex-direction: column; width: 84px; font-size: 14px; line-height: 20px; align-items: flex-end; }

/* overlaid brand mark */
.mark { position: absolute; left: 44%; bottom: 21px; width: 230px; display: flex; flex-direction: column; align-items: center; color: #8080809c; pointer-events: none; }
.mark b { font: 700 65px/68px "DejaVu Sans", sans-serif; }
.mark span { font: 700 38px/40px "Liberation Sans", sans-serif; }
```
FILE: app.js
```javascript
const COLUMNS = 16;
const BLANK = '،َ،َ،َ,';
const HEADINGS = ['رقم السند', 'التاريخ', 'أصل السند', 'مدين', 'دائن', 'بيان القلم'];
const RECORDS = [
  [13, 'دفع: ١'], [40, 'دفع: ٢'], [52, 'دفع: ٤'], [64, 'دفع: ٥'],
  [70, 'دفع: ٦'], [110, 'دفع: ١٦'], [123, 'دفع: ١٨'], [135, 'دفع']
];

const body = document.querySelector('.cells tbody');

function addRow(number, className, values) {
  const row = document.createElement('tr');
  row.className = className;
  const cells = Array.from({ length: COLUMNS }, (_, i) =>
    `<td${values[i] === BLANK ? ' class="code"' : ''}>${values[i] || ''}</td>`);
  row.innerHTML = `<th><div>${number}</div></th>` + cells.join('');
  body.append(row);
  return row;
}

const arrow = '<svg width="7" height="4" viewBox="0 0 7 4"><path d="M0 0h7L3.500 4z" fill="#666"/></svg>';
const funnel = '<svg width="13" height="12" viewBox="0 0 13 12"><path d="M3 0h10L9 5v6H7V5zM0 8h5l-2.500 3z" fill="#555"/></svg>';

addRow(1, 't1', ['اسم الحساب:']);
addRow(2, 't1 edge', ['نوع العملة: $', '', '<div class="cursor"></div>']);
addRow(3, 't3', HEADINGS.map((text, i) =>
  `${text}<button class="filter" aria-label="تصفية">${i === 5 ? funnel : arrow}</button>`));

RECORDS.forEach(([number, text]) => {
  const last = number === 135;
  const row = addRow(number, last ? 'rec' : 'rec filtered', [BLANK, BLANK, text, BLANK, BLANK]);
  if (last) row.cells[5].classList.add('flag');
});

for (let n = 136; n <= 149; n++) addRow(n, '', []);
addRow('', '', []);
```
